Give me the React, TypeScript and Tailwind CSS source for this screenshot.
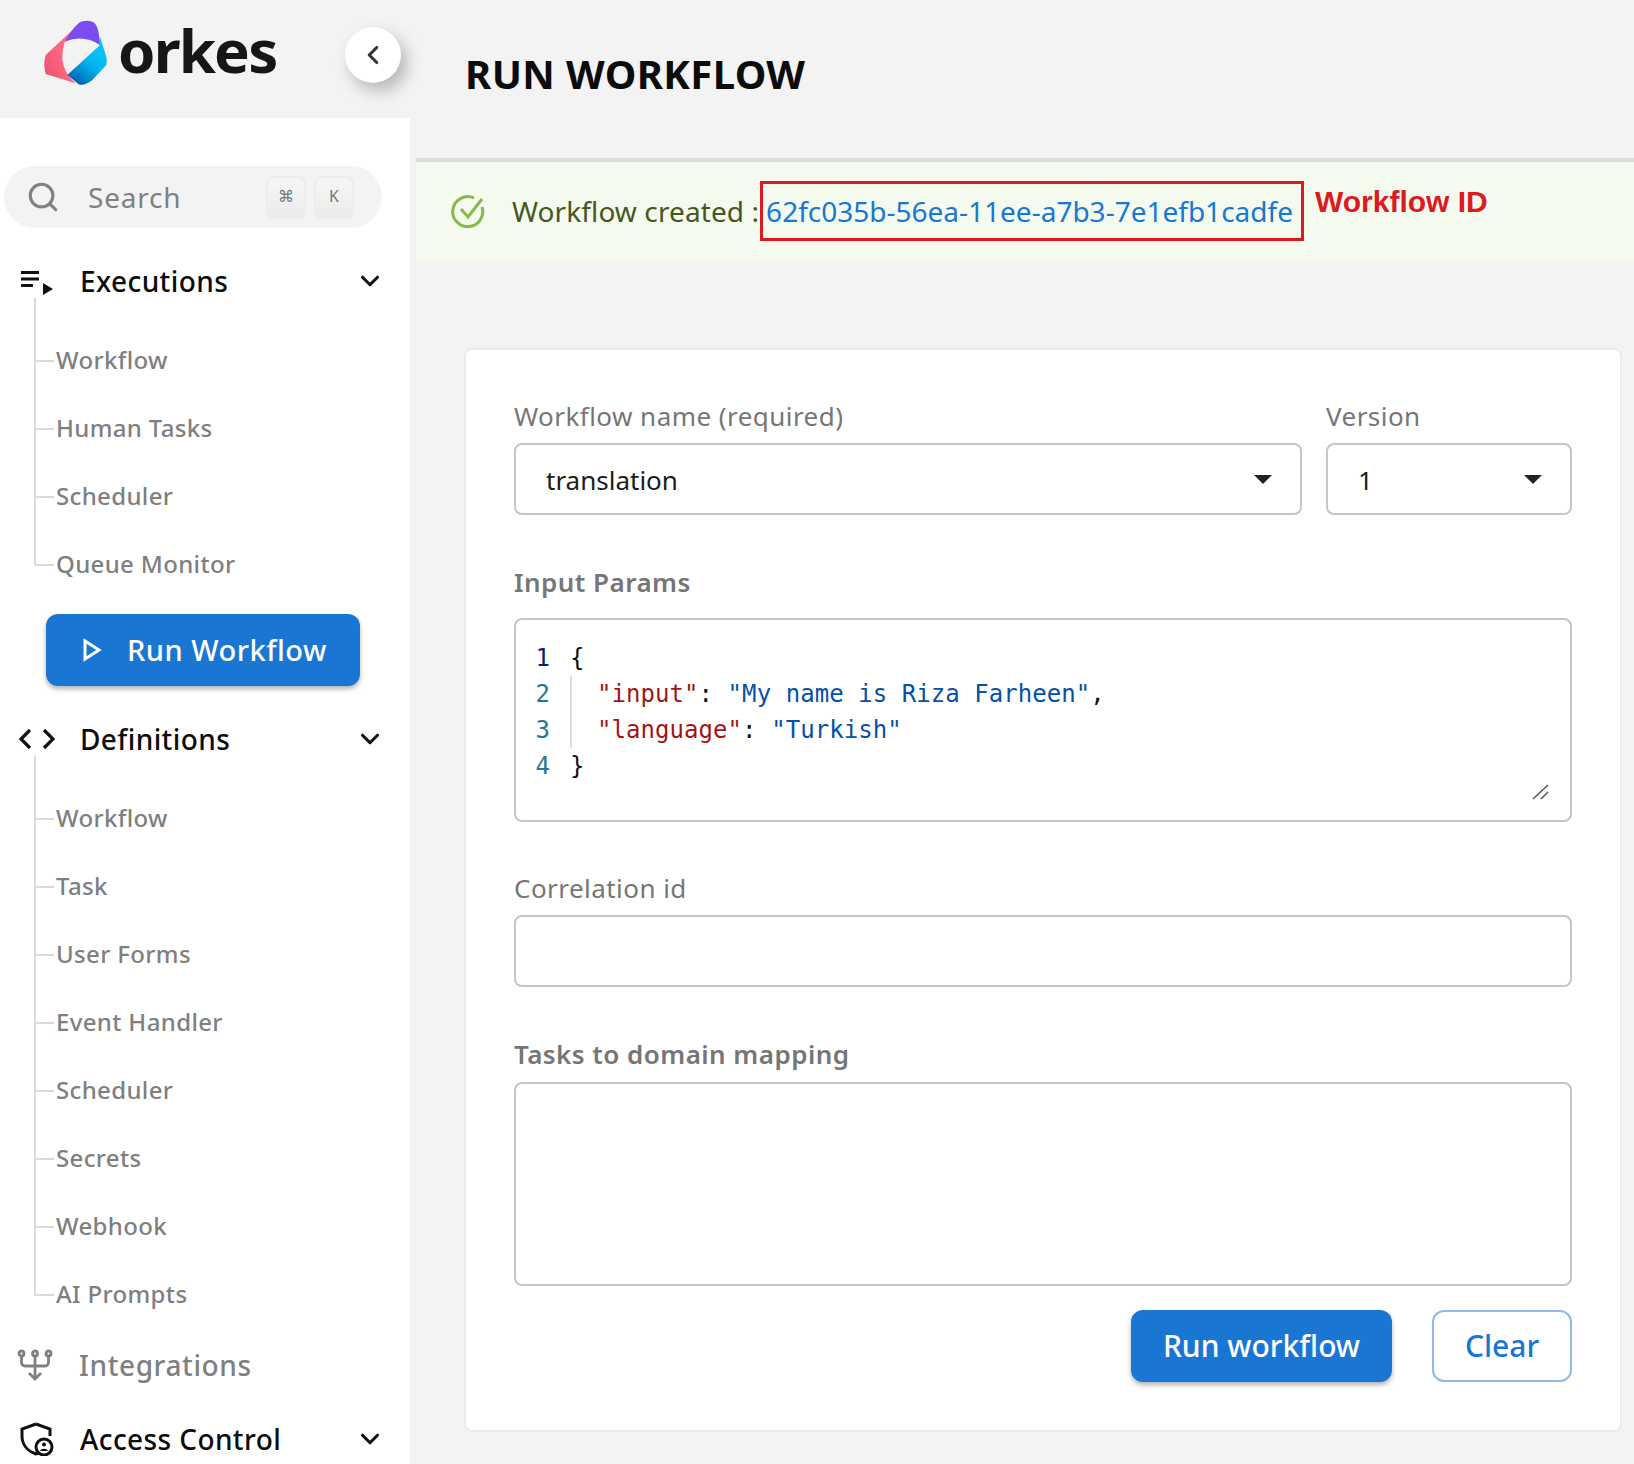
import { ChevronDown, ChevronLeft, Search } from "lucide-react";

const font = { fontFamily: '"Noto Sans", sans-serif' };

const executions = ["Workflow", "Human Tasks", "Scheduler", "Queue Monitor"];
const definitions = ["Workflow", "Task", "User Forms", "Event Handler", "Scheduler", "Secrets", "Webhook", "AI Prompts"];

const Logo = () => (
  <svg width="66" height="68" viewBox="0 0 66 68" className="shrink-0">
    <defs>
      <linearGradient id="lg-pink" x1="0" y1="1" x2="1" y2="0.2">
        <stop offset="0" stopColor="#e2506c" />
        <stop offset="0.5" stopColor="#ff6580" />
        <stop offset="1" stopColor="#ff6b80" />
      </linearGradient>
      <linearGradient id="lg-blue" x1="0.3" y1="1" x2="0.7" y2="0.3">
        <stop offset="0" stopColor="#0062b4" />
        <stop offset="0.6" stopColor="#00b0ea" />
        <stop offset="1" stopColor="#08c2f4" />
      </linearGradient>
    </defs>
    <path d="M36 4L2.7 35Q0 43 2.7 54L32.7 63.3L26 56.7Q19 46 19.3 36.7Q19.5 28 21.7 21.7Z" fill="url(#lg-pink)" />
    <path d="M21.7 21.7Q28 10 36 2.7Q42 -1 50 2Q56 5 57 25Q40 14 21.7 21.7Z" fill="#7c4df0" />
    <path d="M57 16.7L63.3 36.7Q64.5 42 63.3 45L49.3 60Q42 66 36 64.5L24.3 55L57 25Z" fill="url(#lg-blue)" />
  </svg>
);

const ExecutionsIcon = () => (
  <svg width="34" height="28" viewBox="0 0 34 28" className="shrink-0">
    <path d="M2 5.5h18M2 12h18M2 18.5h12" stroke="#111" strokeWidth="3" />
    <path d="M24 16l10 6-10 6z" fill="#111" />
  </svg>
);

const CodeIcon = () => (
  <svg width="36" height="24" viewBox="0 0 36 24" fill="none" className="shrink-0">
    <path d="M11 3L2 12l9 9M25 3l9 9-9 9" stroke="#111" strokeWidth="3.2" />
  </svg>
);

const IntegrationsIcon = () => (
  <svg width="36" height="32" viewBox="0 0 36 32" fill="none" stroke="#808080" strokeWidth="2.8" className="shrink-0">
    <circle cx="4.5" cy="4.5" r="2.5" />
    <circle cx="18" cy="4.5" r="2.5" />
    <circle cx="31.5" cy="4.5" r="2.5" />
    <path d="M4.5 7v6q0 4 4 4h19q4 0 4-4V7M18 7v22M12 24l6 6 6-6" />
  </svg>
);

const AccessIcon = () => (
  <svg width="36" height="34" viewBox="0 0 36 34" fill="none" className="shrink-0">
    <path d="M17 2L31 7v7M20 31l-3 1C8 29 3 22 3 14V7l14-5" stroke="#111" strokeWidth="3" />
    <circle cx="25" cy="25" r="8" fill="#fff" stroke="#111" strokeWidth="3" />
    <circle cx="25" cy="22.5" r="2" fill="#111" />
    <path d="M21 29c1-3 7-3 8 0z" fill="#111" />
  </svg>
);

const SubList = ({ items }: { items: string[] }) => (
  <ul className="relative ml-[34px] pt-[29px]">
    <span className="absolute left-0 top-0 bottom-[34px] w-[2px] bg-[#dadada]" />
    {items.map((item, i) => (
      <li key={i} className="flex h-[68px] items-center">
        <span className="h-[2px] w-[20px] bg-[#dadada]" />
        <span className="ml-[2px] -mt-[3px] text-[24px] font-medium tracking-[0.35px] text-[#7f7f7f]">{item}</span>
      </li>
    ))}
  </ul>
);

const NavRow = ({ icon, label, className }: { icon: React.ReactNode; label: string; className: string }) => (
  <div className={`flex h-[34px] items-center pr-[25px] ${className}`}>
    <div className="flex w-[80px] justify-start pl-[19px]">{icon}</div>
    <span className="flex-1 text-[28px] font-medium tracking-[0.4px] text-[#0c0c0c]">{label}</span>
    <ChevronDown size={30} strokeWidth={2.5} className="text-[#111]" />
  </div>
);

const Key = ({ children }: { children: React.ReactNode }) => (
  <div className="flex h-[43px] w-[40px] items-center justify-center rounded-lg border-2 border-b-[4px] border-[#ececec] bg-linear-to-b from-[#f6f6f6] to-[#ececec] text-[16px] text-[#777]">
    {children}
  </div>
);

const Sidebar = () => (
  <aside className="flex w-[410px] shrink-0 flex-col">
    <div className="relative flex h-[118px] items-start bg-[#f3f3f3] pl-[43px] pt-[20px]">
      <Logo />
      <span className="ml-[9px] -mt-[12px] text-[60px] font-bold leading-[84px] tracking-[-1.8px] text-[#161616]">orkes</span>
      <button className="absolute left-[345px] top-[27px] flex h-[56px] w-[56px] items-center justify-center rounded-full bg-white shadow-[6px_8px_16px_rgba(0,0,0,0.25)]">
        <ChevronLeft size={30} strokeWidth={2.5} className="text-[#333]" />
      </button>
    </div>
    <div className="flex-1 overflow-hidden bg-white pt-[48px]">
      <div className="ml-[4px] flex h-[62px] w-[378px] items-center rounded-full bg-[#f3f3f3] pl-[22px] pr-[28px]">
        <Search size={34} strokeWidth={2.2} className="text-[#808080]" />
        <span className="ml-[28px] flex-1 text-[28px] tracking-[0.8px] text-[#808080]">Search</span>
        <div className="flex gap-[8px]">
          <Key>⌘</Key>
          <Key>K</Key>
        </div>
      </div>
      <NavRow icon={<ExecutionsIcon />} label="Executions" className="mt-[36px]" />
      <SubList items={executions} />
      <button className="ml-[46px] mt-[15px] flex h-[72px] w-[314px] items-center rounded-[12px] bg-[#1976d2] pl-[36px] text-white shadow-[0_3px_5px_rgba(0,0,0,0.3)]">
        <svg width="20" height="24" viewBox="0 0 20 24" fill="none" stroke="#fff" strokeWidth="3">
          <path d="M3 3l14 9-14 9z" />
        </svg>
        <span className="ml-[25px] text-[29px] font-medium tracking-[0.5px]">Run Workflow</span>
      </button>
      <NavRow icon={<CodeIcon />} label="Definitions" className="mt-[36px]" />
      <SubList items={definitions} />
      <div className="mt-[19px] flex h-[34px] items-center pl-[17px]">
        <IntegrationsIcon />
        <span className="ml-[26px] text-[28px] font-medium tracking-[0.6px] text-[#808080]">Integrations</span>
      </div>
      <NavRow icon={<AccessIcon />} label="Access Control" className="mt-[40px]" />
    </div>
  </aside>
);

const Caret = () => <span className="h-0 w-0 border-x-[9px] border-t-[9px] border-x-transparent border-t-[#222]" />;

const Select = ({ value, className }: { value: string; className: string }) => (
  <div className={`flex h-[72px] items-center justify-between rounded-[8px] border-2 border-[#c6c6c6] pl-[30px] pr-[28px] text-[26px] text-[#1c1c1c] ${className}`}>
    <span className="mt-[3px]">{value}</span>
    <Caret />
  </div>
);

const Label = ({ children, bold }: { children: React.ReactNode; bold?: boolean }) => (
  <div className={`h-[36px] text-[26px] leading-[36px] tracking-[0.45px] text-[#767676] ${bold ? "font-semibold" : ""}`}>{children}</div>
);

const CodeLine = ({ n, color, children, guide }: { n: number; color: string; children: React.ReactNode; guide?: boolean }) => (
  <div className="flex h-[36px] items-center">
    <span className={`w-[34px] text-right ${color}`}>{n}</span>
    <div className={`ml-[20px] flex h-full items-center whitespace-pre ${guide ? "border-l-2 border-[#dcdcdc] pl-[25px]" : ""}`}>{children}</div>
  </div>
);

const Editor = () => (
  <div
    className="relative h-[204px] rounded-[8px] border-2 border-[#c6c6c6] pt-[20px] text-[24px] leading-[36px] tracking-[0.06px] text-[#111]"
    style={{ fontFamily: '"DejaVu Sans Mono", monospace' }}
  >
    <CodeLine n={1} color="text-[#0b216f]">{"{"}</CodeLine>
    <CodeLine n={2} color="text-[#237893]" guide>
      <span className="text-[#a31515]">"input"</span>:{" "}
      <span className="text-[#0451a5]">"My name is Riza Farheen"</span>,
    </CodeLine>
    <CodeLine n={3} color="text-[#237893]" guide>
      <span className="text-[#a31515]">"language"</span>:{" "}
      <span className="text-[#0451a5]">"Turkish"</span>
    </CodeLine>
    <CodeLine n={4} color="text-[#237893]">{"}"}</CodeLine>
    <svg width="18" height="16" viewBox="0 0 18 16" className="absolute bottom-[20px] right-[20px]" stroke="#555" strokeWidth="1.5">
      <path d="M1 15L16 1M9 15l7-7" />
    </svg>
  </div>
);

const Main = () => (
  <main className="min-w-0 flex-1 pl-[6px]">
    <div className="flex h-[158px] items-start pl-[49px] pt-[49px]">
      <h1 className="text-[40px] font-bold leading-[50px] tracking-[0.4px] text-[#0c0c0c]">RUN WORKFLOW</h1>
    </div>
    <div className="h-[4px] bg-[#dcdcdc]" />
    <div className="relative flex h-[98px] items-center bg-[#f4fbee] pl-[35px] text-[28px]">
      <svg width="34" height="36" viewBox="0 0 34 36" fill="none" stroke="#86b84a" strokeWidth="3">
        <path d="M31 14a15 15 0 1 1-8-9" />
        <path d="M10 16l7 8 14-18" />
      </svg>
      <span className="ml-[27px] tracking-[0.1px] text-[#45561f]">Workflow created :</span>
      <span className="ml-[7px] text-[#1976d2]">62fc035b-56ea-11ee-a7b3-7e1efb1cadfe</span>
      <div className="absolute left-[344px] top-[19px] h-[60px] w-[544px] border-[3px] border-[#dd1a22]" />
      <span
        className="absolute left-[899px] top-[22px] text-[30px] font-bold leading-[36px] text-[#dd1a22]"
        style={{ fontFamily: '"Liberation Sans", sans-serif' }}
      >
        Workflow ID
      </span>
    </div>
    <section className="ml-[48px] mr-[12px] mt-[88px] h-[1084px] rounded-[8px] border-2 border-[#ebebeb] bg-white px-[48px] pt-[48px]">
      <div className="flex gap-[24px]">
        <div className="flex-1">
          <Label>Workflow name (required)</Label>
          <Select value="translation" className="mt-[9px]" />
        </div>
        <div className="w-[246px]">
          <Label>Version</Label>
          <Select value="1" className="mt-[9px]" />
        </div>
      </div>
      <div className="mt-[49px]">
        <Label bold>Input Params</Label>
      </div>
      <div className="mt-[18px]">
        <Editor />
      </div>
      <div className="mt-[48px]">
        <Label>Correlation id</Label>
      </div>
      <div className="mt-[9px] h-[72px] rounded-[8px] border-2 border-[#c6c6c6]" />
      <div className="mt-[49px]">
        <Label bold>Tasks to domain mapping</Label>
      </div>
      <div className="mt-[10px] h-[204px] rounded-[8px] border-2 border-[#c6c6c6]" />
      <div className="mt-[24px] flex justify-end gap-[40px]">
        <button className="h-[72px] w-[261px] rounded-[12px] bg-[#1976d2] pb-[2px] text-[30px] font-medium text-white shadow-[0_3px_5px_rgba(0,0,0,0.3)]">
          Run workflow
        </button>
        <button className="h-[72px] w-[140px] rounded-[12px] border-2 border-[#8fb9e8] pb-[2px] text-[30px] font-medium text-[#1976d2]">
          Clear
        </button>
      </div>
    </section>
  </main>
);

export default function App() {
  return (
    <div className="flex h-[1464px] overflow-hidden bg-[#f3f3f3]" style={font}>
      <Sidebar />
      <Main />
    </div>
  );
}
